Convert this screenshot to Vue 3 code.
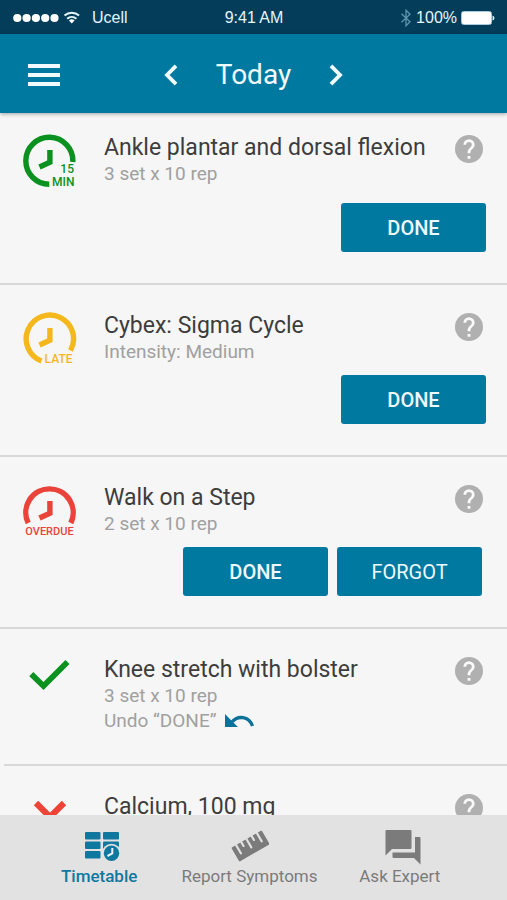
<script setup>
import { ref } from 'vue'

const activeTab = ref('timetable')

const tasks = [
  { id: 1, status: 'soon', title: 'Ankle plantar and dorsal flexion', detail: '3 set x 10 rep', actions: ['DONE'] },
  { id: 2, status: 'late', title: 'Cybex: Sigma Cycle', detail: 'Intensity: Medium', actions: ['DONE'] },
  { id: 3, status: 'overdue', title: 'Walk on a Step', detail: '2 set x 10 rep', actions: ['DONE', 'FORGOT'] },
  { id: 4, status: 'done', title: 'Knee stretch with bolster', detail: '3 set x 10 rep', undo: 'Undo “DONE”', actions: [] },
  { id: 5, status: 'missed', title: 'Calcium, 100 mg', actions: [] },
]

const tabs = [
  { id: 'timetable', label: 'Timetable' },
  { id: 'symptoms', label: 'Report Symptoms' },
  { id: 'expert', label: 'Ask Expert' },
]
</script>

<template>
  <div class="app">
    <div class="status">
      <div class="status-left">
        <svg width="68" height="16" viewBox="0 0 68 16" fill="#fff" aria-hidden="true">
          <circle v-for="n in 5" :key="n" :cx="n * 9.3 - 5" cy="8" r="4.1" />
          <g fill="none" stroke="#e4f6ff" stroke-width="2">
            <path d="M51.5 5.6a11 11 0 0 1 14.6 0" />
            <path d="M54.2 8.8a7 7 0 0 1 9.2 0" />
          </g>
          <path d="M58.8 13.6l-2.8-3.1a4.4 4.4 0 0 1 5.6 0z" />
        </svg>
        <span>Ucell</span>
      </div>
      <span>9:41 AM</span>
      <div class="status-right">
        <svg width="12" height="18" viewBox="0 0 12 18" fill="none" stroke="#5f94ad" stroke-width="1.3" aria-hidden="true">
          <path d="M1.500 4.800l8.500 8L6 16.800V1.200l4 4-8.500 8" />
        </svg>
        <span>100%</span>
        <svg width="34" height="14" viewBox="0 0 34 14" aria-hidden="true">
          <rect x=".5" y=".5" width="30" height="13" rx="2" fill="none" stroke="#a9cbdc" />
          <rect x="1" y="1" width="29" height="12" rx="1" fill="#fff" />
          <path d="M31.500 4.500q2 .5 2 2.500t-2 2.500z" fill="#d7edf7" />
        </svg>
      </div>
    </div>

    <header class="bar">
      <button class="icon-btn" aria-label="Menu">
        <svg width="32" height="24" viewBox="0 0 32 24" fill="#f1fbff"><path d="M0 1h32v4H0zM0 10h32v4H0zM0 19h32v4H0z" /></svg>
      </button>
      <div class="day">
        <button class="icon-btn" aria-label="Previous day">
          <svg width="14" height="22" viewBox="0 0 14 22" fill="none" stroke="#f1fbff" stroke-width="3.800"><path d="M12 1.800L3 11l9 9.200" /></svg>
        </button>
        <h1>Today</h1>
        <button class="icon-btn" aria-label="Next day">
          <svg width="14" height="22" viewBox="0 0 14 22" fill="none" stroke="#f1fbff" stroke-width="3.800"><path d="M2 1.800L11 11l-9 9.200" /></svg>
        </button>
      </div>
    </header>

    <main class="list">
      <article v-for="t in tasks" :key="t.id" class="row" :class="'row--' + t.status">
        <div class="state">
          <svg v-if="t.status === 'soon'" width="54" height="54" viewBox="0 0 54 54" fill="none" stroke="#0b9120" stroke-width="5.400">
            <path d="M49.800 28A23.500 23.500 0 1 0 26.300 50.300" />
            <path d="M26.900 16v12.200L16.500 33" />
            <text x="51" y="39" text-anchor="end" font-size="12" class="mark mark--soon">15</text>
            <text x="51.500" y="52" text-anchor="end" font-size="12" class="mark mark--soon">MIN</text>
          </svg>
          <svg v-else-if="t.status === 'late'" width="54" height="54" viewBox="1 0 54 54" fill="none" stroke="#f5b81c" stroke-width="5.400">
            <path d="M48.500 38.500A23.700 23.700 0 1 0 19.500 49" />
            <path d="M27.900 16v12.200L17.500 33" />
            <text x="50.500" y="51" text-anchor="end" font-size="12" class="mark mark--late">LATE</text>
          </svg>
          <svg v-else-if="t.status === 'overdue'" width="54" height="54" viewBox="0 0 54 54" fill="none" stroke="#e9433a" stroke-width="5.400">
            <path d="M5.200 38A23.700 23.700 0 1 1 47.800 38" />
            <path d="M26.900 16v12.200L16.500 33" />
            <text x="26.500" y="50" text-anchor="middle" font-size="11" class="mark mark--overdue">OVERDUE</text>
          </svg>
          <svg v-else-if="t.status === 'done'" width="54" height="36" viewBox="0 0 54 36" fill="none" stroke="#0b9120" stroke-width="5.800">
            <path d="M8.300 17.200l12.200 11.800L44.500 5" />
          </svg>
          <svg v-else width="54" height="36" viewBox="0 0 54 36" fill="none" stroke="#ee4438" stroke-width="6.200">
            <path d="M13 9l28 28M41 9l-28 28" />
          </svg>
        </div>

        <div class="text">
          <h2>{{ t.title }}</h2>
          <p v-if="t.detail">{{ t.detail }}</p>
          <button v-if="t.undo" class="undo">
            {{ t.undo }}
            <svg width="32" height="16" viewBox="0 0 32 16">
              <path d="M1 1v13h13L9.500 9.800" fill="#0d7299" />
              <path d="M7.500 9.500C14 1.500 25 3.500 28.500 13" fill="none" stroke="#0d7299" stroke-width="3.400" />
            </svg>
          </button>
        </div>

        <button class="help" :aria-label="'Help: ' + t.title">
          <svg width="28" height="28" viewBox="2 2 20 20" fill="#b0b0b0">
            <circle cx="12" cy="12" r="10" />
            <path fill="#fafafa" d="M13 19h-2v-2h2zM15.070 11.250l-.9.920C13.450 12.900 13 13.500 13 15h-2v-.5c0-1.100.45-2.100 1.170-2.830l1.240-1.260c.37-.36.59-.86.59-1.410a2 2 0 0 0-4 0H8a4 4 0 0 1 8 0c0 .88-.36 1.680-.93 2.250z" />
          </svg>
        </button>

        <div v-if="t.actions.length" class="actions">
          <button v-for="a in t.actions" :key="a" class="btn" :class="{ 'btn--plain': a === 'FORGOT' }">{{ a }}</button>
        </div>
      </article>
    </main>

    <nav class="tabs">
      <button v-for="tab in tabs" :key="tab.id" class="tab" :class="{ 'tab--on': tab.id === activeTab }" @click="activeTab = tab.id">
        <svg v-if="tab.id === 'timetable'" width="42" height="36" viewBox="-6 0 42 36" fill="currentColor">
          <rect x="1" y="3" width="15.500" height="7.500" rx="1" />
          <rect x="19" y="3" width="16" height="7.500" rx="1" />
          <rect x="1" y="12.500" width="15.500" height="7.500" rx="1" />
          <rect x="19" y="12.500" width="16" height="7.500" rx="1" />
          <rect x="1" y="22" width="15.500" height="7.500" rx="1" />
          <circle cx="27.500" cy="24.300" r="9.500" fill="#e2e2e2" />
          <circle cx="27.500" cy="24.300" r="7.700" />
          <path d="M28.300 19v5.500l-4.800 2.500" fill="none" stroke="#e8f4f8" stroke-width="2" />
        </svg>
        <svg v-else-if="tab.id === 'symptoms'" width="40" height="36" viewBox="0 0 40 36" fill="currentColor">
          <g transform="translate(21.500 17) rotate(-30)">
            <rect x="-17.500" y="-8" width="35" height="16" rx="1" />
            <path d="M-12-9V1.500M-6-9v5.500M0-9V1.500M6-9v5.500M12-9V1.500" fill="none" stroke="#e2e2e2" stroke-width="2.200" stroke-linecap="round" />
          </g>
        </svg>
        <svg v-else width="42" height="36" viewBox="-6 -1 42 36" fill="currentColor">
          <path d="M1.500 0h24q1 0 1 1v17q0 1-1 1H7l-6.500 6.500V1q0-1 1-1z" />
          <path d="M30 7h4.500q1 0 1 1v26.500L29 28H8.500q-1 0-1-1v-4.500H30z" />
        </svg>
        <span>{{ tab.label }}</span>
      </button>
    </nav>
  </div>
</template>

<style>
body {
  margin: 0;
}
</style>

<style scoped>
.app {
  display: flex;
  flex-direction: column;
  height: 100vh;
  background: #f6f6f6;
  font-family: Roboto, "Liberation Sans", sans-serif;
  color: #3d3d3d;
}
button {
  border: 0;
  padding: 0;
  background: none;
  font: inherit;
  color: inherit;
  cursor: pointer;
}
svg {
  display: block;
}
.status {
  display: grid;
  grid-template-columns: 1fr auto 1fr;
  align-items: center;
  height: 34px;
  padding: 2px 12px 0 13px;
  box-sizing: border-box;
  background: #033d5a;
  color: #e4f6ff;
  font: 16px "Liberation Sans", Arial, sans-serif;
}
.status-left,
.status-right {
  display: flex;
  align-items: center;
}
.status-left {
  gap: 11px;
}
.status-right {
  justify-content: flex-end;
  gap: 4px;
}
.bar {
  position: relative;
  display: grid;
  grid-template-columns: 1fr auto 1fr;
  align-items: center;
  height: 79px;
  padding: 2px 28px 0;
  box-sizing: border-box;
  background: #0079a1;
  color: #f1fbff;
  box-shadow: 0 1px 4px rgba(0, 0, 0, 0.35);
}
.icon-btn {
  justify-self: start;
}
.day {
  display: flex;
  align-items: center;
  gap: 38px;
}
h1 {
  margin: 0;
  font-size: 28px;
  line-height: 36px;
  font-weight: 400;
}
.list {
  flex: 1;
  min-height: 0;
  overflow: hidden;
}
.row {
  display: grid;
  grid-template-columns: 81px 1fr auto;
  padding: 28px 21px 31px 23px;
  border-bottom: 2px solid #d8d8d8;
  margin-bottom: -1px;
}
.row--soon {
  padding-top: 21px;
}
.row--done {
  margin-left: 4px;
  padding-left: 19px;
}
.state {
  box-sizing: border-box;
  height: 52px;
  padding-top: 1px;
}
.row--soon .state,
.row--late .state {
  padding-top: 0;
}
h2 {
  margin: 0;
  font-size: 23px;
  line-height: 28px;
  font-weight: 400;
}
p,
.undo {
  margin: 0;
  font-size: 19px;
  line-height: 24px;
  color: #a0a0a0;
}
.undo {
  display: flex;
  align-items: center;
  gap: 8px;
  margin-top: 1px;
}
.help {
  align-self: start;
  margin: 1px 3px 0 0;
}
.actions {
  grid-column: 2 / 4;
  display: flex;
  justify-content: flex-end;
  gap: 9px;
  margin-top: 11px;
}
.row--soon .actions {
  margin-top: 17px;
}
.row--overdue .actions {
  padding-right: 4px;
}
.btn {
  width: 145px;
  height: 49px;
  border-radius: 3px;
  background: #0079a1;
  color: #eefaff;
  font-size: 20px;
  font-weight: 500;
}
.btn--plain {
  font-weight: 400;
}
.mark {
  stroke: none;
  font-weight: 500;
}
.mark--soon {
  fill: #0b9120;
}
.mark--late {
  fill: #f5b81c;
}
.mark--overdue {
  fill: #e9433a;
}
.tabs {
  display: grid;
  grid-template-columns: repeat(3, 1fr);
  height: 85px;
  padding: 0 32px 0 24px;
  box-sizing: border-box;
  background: #e2e2e2;
  color: #7b7b7b;
}
.tab {
  display: flex;
  flex-direction: column;
  align-items: center;
  padding-top: 14px;
  font-size: 17px;
  line-height: 22px;
  white-space: nowrap;
}
.tab--on {
  color: #0f789f;
  font-weight: 500;
}
</style>
